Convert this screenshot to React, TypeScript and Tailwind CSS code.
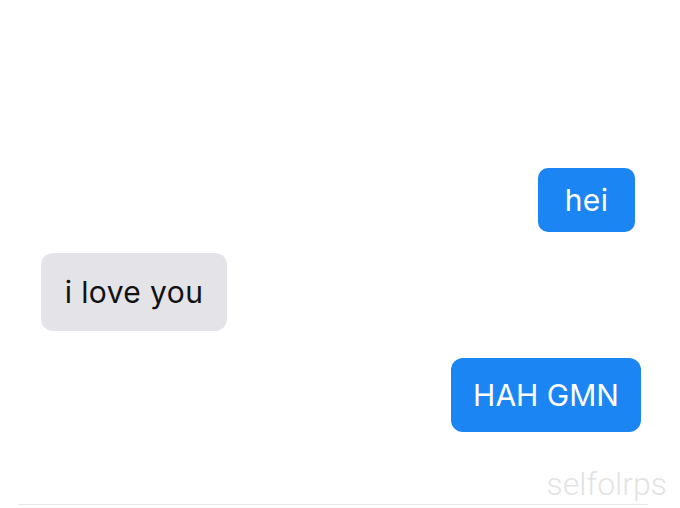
export default function App() {
  return (
    <div className="flex h-[508px] w-[680px] flex-col bg-white font-['Inter',sans-serif]">
      <div className="h-[168px]" />

      {/* sent */}
      <div className="flex justify-end pr-[45px]">
        <div className="flex h-[64px] w-[97px] items-center justify-center rounded-[10px] bg-[#1b85f3] text-[30px] tracking-[0.3px] text-white">
          hei
        </div>
      </div>

      {/* received */}
      <div className="mt-[21px] flex pl-[41px]">
        <div className="flex h-[78px] w-[186px] items-center justify-center rounded-[12px] bg-[#e3e3e8] text-[30px] tracking-[0.4px] text-[#111]">
          i love you
        </div>
      </div>

      {/* sent */}
      <div className="mt-[27px] flex justify-end pr-[39px]">
        <div className="flex h-[74px] w-[190px] items-center justify-center rounded-[12px] bg-[#1b85f3] text-[30px] text-white">
          HAH GMN
        </div>
      </div>

      <div className="mt-[34px] flex justify-end pr-[13px] font-['Roboto',sans-serif] text-[32px] leading-[36px] font-light text-[#e3e3e3]">
        selfolrps
      </div>
      <div className="mx-[18px] mt-[2px] h-px w-[630px] bg-[#e8e8e8]" />
    </div>
  );
}
